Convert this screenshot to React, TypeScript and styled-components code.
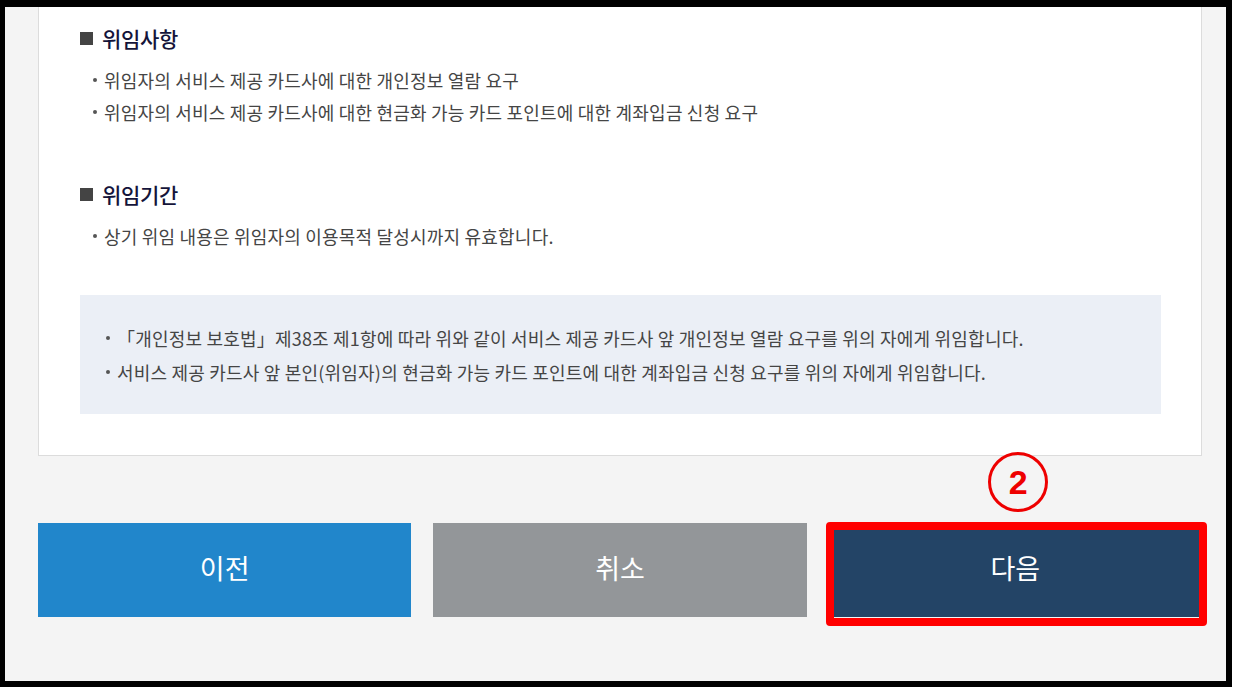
import React from "react";
import styled, { createGlobalStyle } from "styled-components";

const GlobalStyle = createGlobalStyle`
  html, body {
    margin: 0;
    padding: 0;
    background: #ffffff;
  }
  body {
    font-family: "Noto Sans CJK KR", "Noto Sans", sans-serif;
  }
  * { box-sizing: border-box; }
`;

const Frame = styled.div`
  width: 1232px;
  height: 687px;
  border-style: solid;
  border-color: #000;
  border-width: 7px 6px 6px 5px;
  background: #f4f4f4;
  padding: 0 24px 0 33px;
  display: flex;
  flex-direction: column;
  overflow: hidden;
`;

const Card = styled.div`
  background: #fff;
  border: 1px solid #dcdcdc;
  border-top: none;
  height: 449px;
  padding: 18px 40px 0 41px;
`;

const Section = styled.section<{ $gap?: number }>`
  margin-top: ${(p) => p.$gap ?? 0}px;
`;

const Heading = styled.h3`
  margin: 0;
  display: flex;
  align-items: center;
  gap: 9px;
  font-size: 21px;
  line-height: 26px;
  font-weight: 500;
  color: #14143a;
  letter-spacing: -0.3px;
`;

const Square = styled.span`
  width: 13px;
  height: 13px;
  background: #444;
  display: inline-block;
`;

const List = styled.ul<{ $top: number; $lh: number }>`
  list-style: none;
  margin: ${(p) => p.$top}px 0 0;
  padding: 0;
  line-height: ${(p) => p.$lh}px;
`;

const Item = styled.li`
  display: flex;
  align-items: center;
  font-size: 18px;
  color: #454545;
  letter-spacing: 0.2px;
  white-space: nowrap;
`;

const Dot = styled.span`
  width: 4px;
  height: 4px;
  border-radius: 50%;
  background: #555;
  margin: 0 7px 0 13px;
  flex: none;
`;

const NoticeBox = styled.div`
  margin-top: 43px;
  background: #ebeff6;
  height: 119px;
  padding: 26px 0 0 13px;
`;

const ButtonRow = styled.div`
  margin-top: 67px;
  display: grid;
  grid-template-columns: repeat(3, 1fr);
  gap: 22px;
  height: 94px;
`;

const Button = styled.button<{ $bg: string }>`
  border: none;
  background: ${(p) => p.$bg};
  color: #fff;
  font-family: "Noto Sans CJK KR", "Noto Sans", sans-serif;
  font-size: 27px;
  font-weight: 400;
  width: 100%;
  height: 100%;
  padding: 0 0 6px;
  cursor: pointer;
`;

const NextCell = styled.div`
  position: relative;
`;

const Highlight = styled.div`
  position: absolute;
  left: -3px;
  right: -5px;
  top: -1px;
  bottom: -9px;
  border: 8px solid #ff0000;
  border-radius: 4px;
  pointer-events: none;
`;

const StepBadge = styled.div`
  position: absolute;
  left: 50%;
  top: -71px;
  width: 60px;
  height: 60px;
  margin-left: -27px;
  border: 3px solid #ee0000;
  border-radius: 50%;
  display: flex;
  align-items: center;
  justify-content: center;
  color: #ee0000;
  font-family: "Liberation Sans", "Noto Sans", sans-serif;
  font-weight: 700;
  font-size: 34px;
  line-height: 1;
`;

const scope = [
  "위임자의 서비스 제공 카드사에 대한 개인정보 열람 요구",
  "위임자의 서비스 제공 카드사에 대한 현금화 가능 카드 포인트에 대한 계좌입금 신청 요구",
];

const notice = [
  "「개인정보 보호법」제38조 제1항에 따라 위와 같이 서비스 제공 카드사 앞 개인정보 열람 요구를 위의 자에게 위임합니다.",
  "서비스 제공 카드사 앞 본인(위임자)의 현금화 가능 카드 포인트에 대한 계좌입금 신청 요구를 위의 자에게 위임합니다.",
];

export default function App() {
  return (
    <>
      <GlobalStyle />
      <Frame>
        <Card>
          <Section>
            <Heading>
              <Square />
              위임사항
            </Heading>
            <List $top={13} $lh={32}>
              {scope.map((t) => (
                <Item key={t}>
                  <Dot />
                  {t}
                </Item>
              ))}
            </List>
          </Section>
          <Section $gap={53}>
            <Heading>
              <Square />
              위임기간
            </Heading>
            <List $top={13} $lh={32}>
              <Item>
                <Dot />
                상기 위임 내용은 위임자의 이용목적 달성시까지 유효합니다.
              </Item>
            </List>
          </Section>
          <NoticeBox>
            <List $top={0} $lh={34}>
              {notice.map((t) => (
                <Item key={t}>
                  <Dot />
                  {t}
                </Item>
              ))}
            </List>
          </NoticeBox>
        </Card>
        <ButtonRow>
          <Button $bg="#2186cb">이전</Button>
          <Button $bg="#939699">취소</Button>
          <NextCell>
            <StepBadge>2</StepBadge>
            <Button $bg="#234466">다음</Button>
            <Highlight />
          </NextCell>
        </ButtonRow>
      </Frame>
    </>
  );
}
